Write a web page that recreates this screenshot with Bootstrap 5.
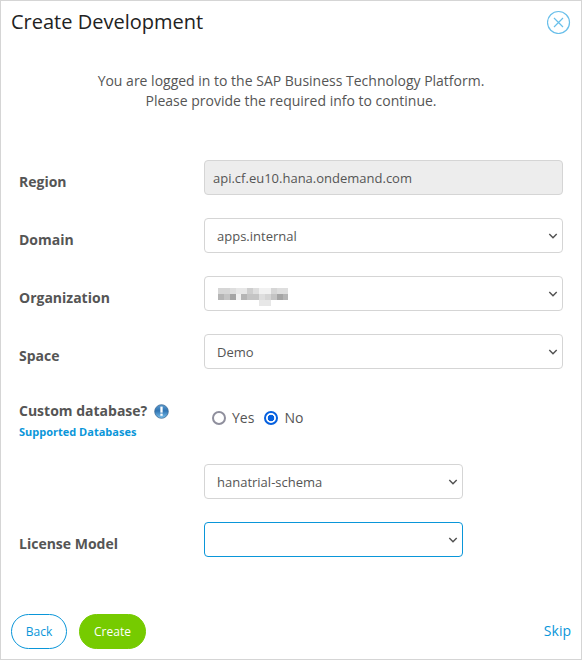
<!DOCTYPE html>
<html lang="en">
<head>
<meta charset="utf-8">
<meta name="viewport" content="width=device-width, initial-scale=1">
<title>Create Development</title>
<link href="https://cdn.jsdelivr.net/npm/bootstrap@5.3.0/dist/css/bootstrap.min.css" rel="stylesheet">
<style>
body{font-family:"Open Sans","Noto Sans",sans-serif;font-size:14px;line-height:20px;color:#555;background:#fff}
.dialog{height:660px;border:1px solid #d5d5d5;padding:0 10px}
.dialog-head{height:43px}
.dialog-title{font-size:20px;line-height:26px;color:#222;font-weight:400;padding-top:8px}
.close-btn{width:24px;height:24px;line-height:0;margin-top:9px}
.intro{margin-top:27px}
.fields{padding:49px 8px 0}
.field{height:58px}
.field-label{width:185px;font-weight:700;padding-top:12px}
.field .form-control,.field .form-select{width:359px;height:35px;font-size:13px;line-height:19px;color:#555;border:1px solid #d5d5d5;border-radius:4px;padding:7px 8px;box-shadow:none}
.field .form-control{background:#ededed}
.field .form-select{padding:8px 30px 6px 12px;background:#fff url("data:image/svg+xml,%3Csvg xmlns='http://www.w3.org/2000/svg' width='10' height='7' viewBox='0 0 10 7'%3E%3Cpath d='M1.3 1 5 4.7 8.7 1' fill='none' stroke='%23505050' stroke-width='1.4'/%3E%3C/svg%3E") no-repeat right 4px top 14px/10px 7px}
.field .narrow{width:259px}
.field .active-select{border-color:#0a96d9}
.org-mask{margin:3px 0 0 1px}
.db-row{height:72px}
.db-row .field-label{padding-top:9px}
.info-icon{margin-left:6.5px}
.db-link{font-size:11px;line-height:22px;color:#0a96d9;display:block}
.radios{padding:16px 0 0 8px;gap:10px}
.radios .form-check-input{width:14px;height:14px;margin:3px 6px 0 0;border:2px solid #8f8f9d;box-shadow:none;background:#fff;float:none}
.radios .form-check-input:checked{border-color:#0560df;background:radial-gradient(circle,#0560df 0 3px,#fff 3.6px)}
.dialog-foot{height:35px;margin-bottom:10px}
.pill{height:35px;border-radius:18px;font-size:12px;line-height:18px;padding:8px 0 7px}
.pill-back{width:56px;color:#0a96d9;border:1px solid #0a96d9}
.pill-create{width:67px;margin-left:12px;color:#fff;background:#76cb00;border:1px solid #76cb00}
.skip{color:#0a96d9;padding-top:7px}
</style>
</head>
<body>
<main class="dialog d-flex flex-column">
  <header class="dialog-head d-flex justify-content-between align-items-start">
    <h1 class="dialog-title mb-0">Create Development</h1>
    <button type="button" class="close-btn btn p-0 border-0" aria-label="Close">
      <svg width="24" height="24" viewBox="0 0 24 24" fill="none" stroke="#69bfea" stroke-width="1.2"><circle cx="11.5" cy="12.5" r="11"/><path d="M7 8l9 9M16 8l-9 9"/></svg>
    </button>
  </header>
  <p class="intro text-center mb-0">You are logged in to the SAP Business Technology Platform.<br>Please provide the required info to continue.</p>
  <form class="fields">
    <div class="field d-flex align-items-start"><label class="field-label" for="region">Region</label><input id="region" class="form-control" value="api.cf.eu10.hana.ondemand.com" disabled></div>
    <div class="field d-flex align-items-start"><span class="field-label">Domain</span><div class="form-select">apps.internal</div></div>
    <div class="field d-flex align-items-start"><span class="field-label">Organization</span>
      <div class="form-select d-flex">
        <svg class="org-mask" width="72" height="18" viewBox="0 0 72 18" shape-rendering="crispEdges">
          <path fill="#d6d6d6" d="M0 0h12v6H0zM53 0h6v6h-6z"/><path fill="#dedede" d="M12 0h6v6h-6zM35 0h6v6h-6zM59 0h11v6H59z"/><path fill="#e7e7e7" d="M18 0h11v6H18zM41 12h12v6H41z"/><path fill="#cecece" d="M29 0h6v6h-6z"/><path fill="#f1f1f1" d="M41 0h12v6H41zM18 6h5v6h-5z"/>
          <path fill="#b5b5b5" d="M0 6h6v6H0zM23 6h6v6h-6zM65 6h5v6h-5z"/><path fill="#c4c4c4" d="M6 6h6v6H6zM29 6h12v6H29zM53 6h6v6h-6z"/><path fill="#a5a5a5" d="M12 6h6v6h-6zM59 6h6v6h-6z"/><path fill="#dedede" d="M41 6h6v6h-6z"/><path fill="#d5d5d5" d="M47 6h6v6h-6z"/>
        </svg>
      </div></div>
    <div class="field d-flex align-items-start"><span class="field-label">Space</span><div class="form-select">Demo</div></div>
    <div class="field db-row d-flex align-items-start">
      <div class="field-label"><div class="d-flex align-items-center">Custom database?
        <svg class="info-icon" width="15" height="15" viewBox="0 0 15 15"><defs><linearGradient id="info" x2="0" y2="1"><stop stop-color="#5a9bd0"/><stop offset=".45" stop-color="#2f74b3"/><stop offset="1" stop-color="#7cc2ee"/></linearGradient></defs><circle cx="7.5" cy="7.5" r="6.8" fill="url(#info)" stroke="#3d6a94" stroke-width=".8"/><path d="M6.5 2.8h2v5.6h-2zM6.5 9.8h2v2h-2z" fill="#fff" stroke="#fff" stroke-width=".3"/></svg></div>
        <a class="db-link text-decoration-none" href="#">Supported Databases</a></div>
      <div class="radios d-flex">
        <label class="d-flex"><input class="form-check-input" type="radio" name="db">Yes</label>
        <label class="d-flex"><input class="form-check-input" type="radio" name="db" checked>No</label>
      </div>
    </div>
    <div class="field d-flex align-items-start"><span class="field-label"></span><div class="form-select narrow">hanatrial-schema</div></div>
    <div class="field d-flex align-items-start"><span class="field-label">License Model</span><div class="form-select narrow active-select"></div></div>
  </form>
  <footer class="dialog-foot d-flex align-items-start mt-auto">
    <button type="button" class="btn pill pill-back">Back</button>
    <button type="button" class="btn pill pill-create">Create</button>
    <a href="#" class="skip text-decoration-none ms-auto">Skip</a>
  </footer>
</main>
<script src="https://cdn.jsdelivr.net/npm/bootstrap@5.3.0/dist/js/bootstrap.bundle.min.js"></script>
</body>
</html>
